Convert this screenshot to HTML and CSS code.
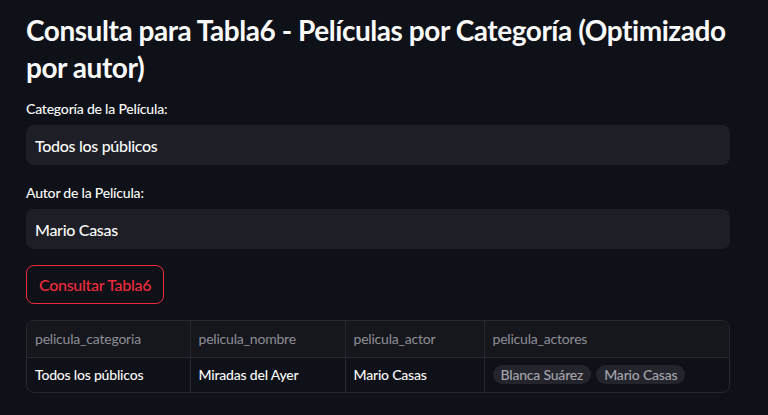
FILE: index.html
```html
<!DOCTYPE html>
<html lang="es">
<head>
<meta charset="utf-8">
<title>Consulta para Tabla6</title>
<link rel="stylesheet" href="styles.css">
</head>
<body>
<main class="main">
  <h1 class="title">Consulta para Tabla6 - Películas por Categoría (Optimizado por autor)</h1>

  <div class="field">
    <label class="label" for="cat">Categoría de la Película:</label>
    <div class="input" id="cat">Todos los públicos</div>
  </div>

  <div class="field">
    <label class="label" for="autor">Autor de la Película:</label>
    <div class="input" id="autor">Mario Casas</div>
  </div>

  <div class="actions">
    <button class="btn" type="button">Consultar Tabla6</button>
  </div>

  <div class="table-wrap">
    <table class="table">
      <colgroup>
        <col class="c1"><col class="c2"><col class="c3"><col class="c4">
      </colgroup>
      <thead>
        <tr>
          <th>pelicula_categoria</th>
          <th>pelicula_nombre</th>
          <th>pelicula_actor</th>
          <th>pelicula_actores</th>
        </tr>
      </thead>
      <tbody>
        <tr>
          <td>Todos los públicos</td>
          <td>Miradas del Ayer</td>
          <td>Mario Casas</td>
          <td><span class="pill">Blanca Suárez</span><span class="pill">Mario Casas</span></td>
        </tr>
      </tbody>
    </table>
  </div>
</main>
</body>
</html>
```

FILE: styles.css
```css
* { box-sizing: border-box; }
html, body {
  margin: 0;
  background: #0e1117;
}
body {
  font-family: "Source Sans Pro", Lato, "Liberation Sans", sans-serif;
  font-weight: 500;
  color: #fafafa;
}
.main {
  width: 768px;
  padding: 12px 38px 0 26px;
  display: flex;
  flex-direction: column;
}
.title {
  margin: 0 0 15px 0;
  font-size: 28px;
  line-height: 37px;
  font-weight: 700;
  color: #fafafa;
  letter-spacing: -0.45px;
}
.field {
  display: flex;
  flex-direction: column;
  margin-bottom: 20px;
}
.field + .field { margin-bottom: 16px; }
.label {
  font-size: 14px;
  line-height: 16px;
  margin-bottom: 8px;
  color: #fafafa;
  letter-spacing: -0.2px;
}
.input {
  height: 40px;
  background: #1e1f26;
  border-radius: 8px;
  padding: 0 9px;
  display: flex;
  align-items: center;
  font-size: 16px;
  color: #fafafa;
  letter-spacing: -0.3px;
}
.actions {
  display: flex;
  margin-bottom: 16px;
}
.btn {
  height: 39px;
  padding: 0 12px;
  background: transparent;
  border: 1px solid #ee2b3c;
  border-radius: 8px;
  color: #ee2b3c;
  font-family: inherit;
  font-weight: 500;
  font-size: 16px;
  letter-spacing: -0.3px;
}
.table-wrap {
  border: 1px solid #272830;
  border-radius: 8px;
  overflow: hidden;
}
.table {
  width: 100%;
  border-collapse: collapse;
  table-layout: fixed;
  font-size: 14px;
  letter-spacing: -0.2px;
}
.c1 { width: 163px; }
.c2 { width: 155px; }
.c3 { width: 139px; }
.table th, .table td {
  text-align: left;
  padding: 0 8px;
  border-left: 1px solid #272830;
  white-space: nowrap;
}
.table th:first-child, .table td:first-child { border-left: none; }
.table th {
  height: 36px;
  font-weight: 400;
  color: #8e8f96;
  background: #16171d;
  border-bottom: 1px solid #272830;
}
.table td {
  height: 35px;
  color: #fafafa;
}
.pill {
  display: inline-block;
  height: 19px;
  line-height: 19px;
  padding: 0 8px;
  margin-right: 5px;
  border-radius: 10px;
  background: #24252c;
  color: #a3a4ab;
  font-size: 14px;
}
```
